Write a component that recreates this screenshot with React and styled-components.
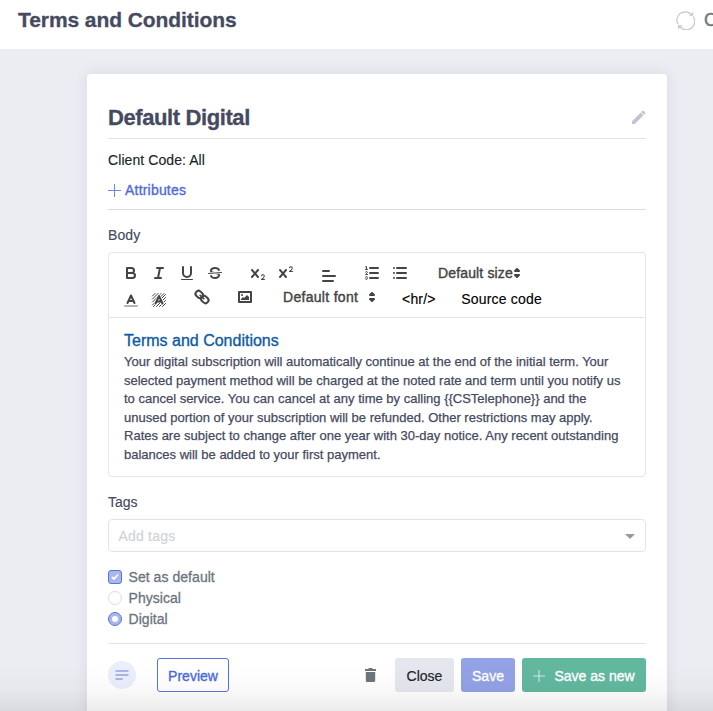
import React from "react";
import styled, { createGlobalStyle, css } from "styled-components";

const Global = createGlobalStyle`
  *, *::before, *::after { box-sizing: border-box; }
  html, body { margin: 0; height: 100%; overflow: hidden; }
  body {
    background: #ecedf3;
    font-family: "Liberation Sans", Arial, sans-serif;
    font-size: 14px;
    color: #464a61;
  }
`;

const Page = styled.div`
  position: relative;
  height: 711px;
  overflow: hidden;
`;

const Header = styled.header`
  display: flex;
  align-items: center;
  height: 49px;
  padding: 0 0 9px 18px;
  background: #fff;
  overflow: hidden;
`;

const PageTitle = styled.h1`
  flex: 1;
  margin: 0;
  font-size: 21px;
  line-height: 24px;
  font-weight: 700;
  letter-spacing: -0.08px;
  white-space: nowrap;
  -webkit-text-stroke: 0.3px;
`;

const HeaderAction = styled.div`
  display: flex;
  align-items: center;
  gap: 9px;
  width: 37px;
  color: #6c757d;
  font-size: 18px;
  white-space: nowrap;
  -webkit-text-stroke: 0.4px;
  svg { flex: none; }
`;

const Card = styled.main`
  width: 580px;
  height: 700px;
  margin: 25px 0 0 87px;
  padding: 28px 21px 0;
  background: #fff;
  border-radius: 4px;
  box-shadow: 0 0 14px rgba(69, 83, 120, 0.13);
`;

const CardHeader = styled.div`
  display: flex;
  align-items: center;
  justify-content: space-between;
  height: 37px;
  padding-bottom: 4px;
  border-bottom: 1px solid #e2e3e8;
`;

const CardTitle = styled.h2`
  margin: 0;
  font-size: 22px;
  line-height: 26px;
  letter-spacing: -0.4px;
  -webkit-text-stroke: 0.3px;
`;

const Pencil = styled.svg`
  margin-bottom: 2px;
`;

const Line = styled.div`
  display: flex;
  align-items: center;
  height: ${(p) => p.$h}px;
  padding-top: ${(p) => p.$pt || 0}px;
  color: ${(p) => p.$color || "#464a61"};
  letter-spacing: ${(p) => p.$ls || 0}px;
  -webkit-text-stroke: ${(p) => p.$stroke || 0.15}px;
`;

const AttributesLink = styled(Line)`
  gap: 4px;
  padding-bottom: 10px;
  border-bottom: 1px solid #dcdde0;
`;

const Editor = styled.section`
  height: 225px;
  border: 1px solid #e4e5ee;
  border-radius: 4px;
`;

const Toolbar = styled.div`
  height: 65px;
  padding: 8px;
  border-bottom: 1px solid #e4e5ee;
`;

const ToolRow = styled.div`
  display: flex;
  gap: 15px;
  height: 24px;
`;

const ToolGroup = styled.div`
  display: flex;
`;

const Tool = styled.button`
  display: flex;
  align-items: flex-start;
  width: 28px;
  height: 24px;
  padding: ${(p) => 3 + (p.$drop || 0)}px 5px 0;
  border: 0;
  background: none;
  color: #444;
  svg { flex: none; overflow: visible; }
`;

const Picker = styled.div`
  display: flex;
  align-items: center;
  justify-content: space-between;
  width: ${(p) => p.$w}px;
  height: 24px;
  padding-left: 9px;
  color: #444;
  letter-spacing: ${(p) => p.$ls}px;
  white-space: nowrap;
  -webkit-text-stroke: 0.4px;
  svg { flex: none; margin-left: -8px; }
`;

const TextTool = styled.button`
  height: 24px;
  margin: 2px 0 0 ${(p) => p.$ml}px;
  padding: 0;
  border: 0;
  background: none;
  color: #000;
  font: 14px "Liberation Sans", Arial, sans-serif;
  letter-spacing: ${(p) => p.$ls || 0}px;
  white-space: nowrap;
  -webkit-text-stroke: 0.15px;
`;

const Content = styled.div`
  padding: 13px 15px 0;
`;

const ContentTitle = styled.div`
  font-size: 16px;
  line-height: 20px;
  margin-bottom: 2px;
  color: #0f5ba3;
  -webkit-text-stroke: 0.35px;
`;

const Copy = styled.div`
  font-size: 13px;
  line-height: 18.6px;
  -webkit-text-stroke: 0.25px;
`;

const CopyLine = styled.div`
  white-space: nowrap;
  letter-spacing: ${(p) => p.$ls || 0}px;
`;

const TagInput = styled.div`
  display: flex;
  align-items: center;
  justify-content: space-between;
  height: 33px;
  padding: 0 10px 0 9.5px;
  border: 1px solid #e3e4ea;
  border-radius: 4px;
  color: #d0d4da;
  letter-spacing: 0.2px;
  -webkit-text-stroke: 0.2px;
`;

const Caret = styled.span`
  margin-top: 1px;
  border: 5px solid transparent;
  border-top-color: #999;
  border-bottom: 0;
`;

const Options = styled.div`
  padding: 14px 0;
`;

const Option = styled.label`
  display: flex;
  align-items: center;
  gap: 6.5px;
  height: 21px;
  color: #6c757d;
  letter-spacing: 0.05px;
  -webkit-text-stroke: 0.3px;
`;

const Mark = styled.span`
  display: grid;
  place-items: center;
  width: 14px;
  height: 14px;
  border: 1px solid #dcdde2;
  border-radius: ${(p) => (p.$square ? 3 : 7)}px;
  ${(p) => p.$on && css`
    border-color: #5875d9;
    background: #aab7ea;
  `}
`;

const Dot = styled.span`
  width: 6px;
  height: 6px;
  border-radius: 50%;
  background: #fff;
`;

const Footer = styled.footer`
  display: flex;
  align-items: center;
  height: 49px;
  padding-top: 14px;
  border-top: 1px solid #e2e3ea;
`;

const RoundButton = styled.button`
  display: grid;
  place-items: center;
  width: 28px;
  height: 28px;
  margin-right: 21px;
  padding: 0;
  border: 0;
  border-radius: 50%;
  background: #ebeefb;
`;

const Actions = styled.div`
  display: flex;
  align-items: center;
  gap: 7px;
  margin-left: auto;
`;

const Trash = styled.svg`
  margin-right: 12px;
`;

const tones = {
  outline: css`border: 1px solid #5573d8; background: #fff; color: #4c6bd6;`,
  muted: css`background: #e4e7ee; color: #212529;`,
  primary: css`background: #93a2e5; color: #fff;`,
  success: css`background: #62b89f; color: #fff;`,
};

const Button = styled.button`
  display: flex;
  align-items: center;
  justify-content: center;
  gap: 9px;
  width: ${(p) => p.$w}px;
  height: 34px;
  padding: 2px 0 0;
  border: 0;
  border-radius: 3px;
  font: 14px "Liberation Sans", Arial, sans-serif;
  letter-spacing: ${(p) => p.$ls || 0}px;
  white-space: nowrap;
  -webkit-text-stroke: ${(p) => p.$stroke || 0.35}px;
  ${(p) => tones[p.$tone]}
`;

const BottomShade = styled.div`
  position: absolute;
  inset: auto 0 0;
  height: 46px;
  background: linear-gradient(transparent, rgba(0, 0, 0, 0.025) 55%, rgba(0, 0, 0, 0.08));
  pointer-events: none;
`;

const Icon = ({ children }) => (
  <svg width="18" height="18" viewBox="0 0 18 18" fill="none" stroke="currentColor" strokeWidth="2" strokeLinecap="round" strokeLinejoin="round">
    {children}
  </svg>
);

const Solid = ({ d }) => <path d={d} fill="currentColor" stroke="none" />;

const CROSS = "M9.65,5.241a1,1,0,0,0-1.409.108L6,7.964,3.759,5.349A1,1,0,0,0,2.192,6.592Q2.215,6.621,2.241,6.649L4.684,9.5,2.241,12.35A1,1,0,0,0,3.71,13.707q.026-.028.049-.057L6,11.036,8.241,13.65a1,1,0,1,0,1.567-1.243Q9.785,12.378,9.759,12.35L7.316,9.5,9.759,6.651A1,1,0,0,0,9.65,5.241Z";
const SMALL_TWO = "M15.5,7H13.861a4.015,4.015,0,0,0,1.914-2.975,1.8,1.8,0,0,0-1.6-1.751A1.922,1.922,0,0,0,12.021,3.7a.5.5,0,1,0,.957.291.917.917,0,0,1,1.053-.725.81.81,0,0,1,.744.762c0,1.077-1.164,1.925-1.934,2.486A1.423,1.423,0,0,0,12,7.5a.5.5,0,0,0,.5.5h3A.5.5,0,0,0,15.5,7Z";

const BoldIcon = () => <Icon><path d="M5 4H9.5a2.5 2.5 0 0 1 0 5H5ZM5 9h5.5a2.5 2.5 0 0 1 0 5H5Z" /></Icon>;
const ItalicIcon = () => <Icon><path d="M7 4h6M5 14h6M8 14 10 4" /></Icon>;
const UnderlineIcon = () => (
  <Icon><path d="M5 3V9a4 4 0 0 0 8 0V3" /><rect x="3" y="15" width="12" height="1" rx=".5" fill="currentColor" stroke="none" /></Icon>
);
const StrikeIcon = () => (
  <Icon>
    <path d="M15.5 8.5 2.5 9.5" strokeWidth="1" />
    <Solid d="M9.007,8C6.542,7.791,6,7.519,6,6.5,6,5.792,7.283,5,9,5c1.571,0,2.765.679,2.969,1.309a1,1,0,0,0,1.9-.617C13.356,4.106,11.354,3,9,3,6.2,3,4,4.538,4,6.5a3.2,3.2,0,0,0,.5,1.843Z" />
    <Solid d="M8.984,10C11.457,10.208,12,10.479,12,11.5c0,.708-1.283,1.5-3,1.5-1.571,0-2.765-.679-2.969-1.309a1,1,0,1,0-1.9.617C4.644,13.894,6.646,15,9,15c2.8,0,5-1.538,5-3.5a3.2,3.2,0,0,0-.5-1.843Z" />
  </Icon>
);
const SubIcon = () => <Icon><Solid d={CROSS} /><g transform="translate(0 8)"><Solid d={SMALL_TWO} /></g></Icon>;
const SuperIcon = () => <Icon><Solid d={CROSS} /><Solid d={SMALL_TWO} /></Icon>;
const AlignIcon = () => <Icon><path d="M3 4h6M3 9h12M3 14h10" /></Icon>;
const OrderedIcon = () => (
  <Icon>
    <path d="M7 4h8M7 9h8M7 14h8" />
    <g strokeWidth="1">
      <path d="M2.500 5.500h2M2.500 2.900 3.500 2.500v3M4.500 10.500h-2c0-.234,1.850-1.076,1.850-2.234A.959.959,0,0,0,2.500,8.156" />
      <path d="M2.500,14.846a.959.959,0,0,0,1.850-.109A.7.7,0,0,0,3.750,14a.688.688,0,0,0,.6-.736.959.959,0,0,0-1.850-.109" />
    </g>
  </Icon>
);
const BulletIcon = () => <Icon><path d="M6 4h9M6 9h9M6 14h9M3 4h0M3 9h0M3 14h0" /></Icon>;
const ColorIcon = () => (
  <Icon><path d="M3 15h12" opacity=".4" /><path d="M5.500 12 9 4.500l3.500 7.500M11.500 10h-5" /></Icon>
);
const BackgroundIcon = () => (
  <Icon>
    <path d="M2.500 5 5 2.500M2.500 8 8 2.500M2.500 11 11 2.500M2.500 14 14 2.500M3.500 15.500 15.500 3.500M6.500 15.500 15.500 6.500M9.500 15.500 15.500 9.500M12.500 15.500 15.500 12.500" strokeWidth="1" />
    <path d="M5.500 12.500 9 5l3.500 7.500" stroke="#fff" strokeWidth="3.200" />
    <path d="M5.500 12.500 9 5l3.500 7.500M11.500 10.500h-5" />
  </Icon>
);
const LinkIcon = () => (
  <Icon>
    <g transform="rotate(42 9 9)" strokeWidth="2">
      <rect x="1.300" y="6" width="7.800" height="6" rx="3" />
      <rect x="8.900" y="6" width="7.800" height="6" rx="3" />
      <path d="M6.500 9h5" strokeWidth="1.600" />
    </g>
  </Icon>
);
const ImageIcon = () => (
  <Icon><rect x="3" y="4" width="12" height="10" /><circle cx="6" cy="7" r="1" fill="currentColor" stroke="none" /><Solid d="M5 12V11L7 9l1 1 3-3 2 2v3Z" /></Icon>
);
const Arrows = () => <Icon><path d="M7 11l2 2 2-2ZM7 7l2-2 2 2Z" fill="currentColor" /></Icon>;

const Plus = ({ size = 13 }) => (
  <svg width={size} height={size} viewBox="0 0 13 13" stroke="currentColor" strokeWidth="1" opacity=".8"><path d="M6.500 0v13M0 6.500h13" /></svg>
);

const body = [
  ["Your digital subscription will automatically continue at the end of the initial term. Your", 0],
  ["selected payment method will be charged at the noted rate and term until you notify us", 0],
  ["to cancel service. You can cancel at any time by calling {{CSTelephone}} and the", 0],
  ["unused portion of your subscription will be refunded. Other restrictions may apply.", 0],
  ["Rates are subject to change after one year with 30-day notice. Any recent outstanding", 0.01],
  ["balances will be added to your first payment.", 0],
];

export default function App() {
  return (
    <Page>
      <Global />
      <Header>
        <PageTitle>Terms and Conditions</PageTitle>
        <HeaderAction>
          <svg width="19" height="19" viewBox="0 0 19 19" fill="none" stroke="#c5c6d3" strokeWidth="1.200">
            <path d="M2.200 13.500A8.200 8.200 0 0 1 15.200 3.600M17 5.500A8.200 8.200 0 0 1 4 15.600" />
            <path d="M12.700 4.800h4.500V1ZM6.500 14.300H2V18.200Z" fill="#c5c6d3" stroke="none" />
          </svg>
          <span>C</span>
        </HeaderAction>
      </Header>
      <Card>
        <CardHeader>
          <CardTitle>Default Digital</CardTitle>
          <Pencil width="15" height="15" viewBox="0 0 15 15" fill="#c3c3d2">
            <path d="M1 11.200 9.700 2.500l2.800 2.800L3.800 14H1ZM10.300 1.900l.8-.8q.9-.8 1.800 0l1 1q.8.900 0 1.800l-.8.8Z" />
          </Pencil>
        </CardHeader>
        <Line $h={42} $color="#212529" $ls={0.08}>Client Code: All</Line>
        <AttributesLink $h={29} $color="#4c6bd6" $stroke={0.35} $ls={0.2}><Plus /> Attributes</AttributesLink>
        <Line $h={42} $pt={8} $ls={0.1}>Body</Line>
        <Editor>
          <Toolbar>
            <ToolRow>
              <ToolGroup>
                <Tool><BoldIcon /></Tool>
                <Tool><ItalicIcon /></Tool>
                <Tool><UnderlineIcon /></Tool>
                <Tool><StrikeIcon /></Tool>
              </ToolGroup>
              <ToolGroup>
                <Tool><SubIcon /></Tool>
                <Tool><SuperIcon /></Tool>
              </ToolGroup>
              <Tool $drop={3}><AlignIcon /></Tool>
              <ToolGroup>
                <Tool><OrderedIcon /></Tool>
                <Tool><BulletIcon /></Tool>
              </ToolGroup>
              <Picker $w={97} $ls={0.15}>Default size<Arrows /></Picker>
            </ToolRow>
            <ToolRow>
              <ToolGroup>
                <Tool $drop={3}><ColorIcon /></Tool>
                <Tool $drop={3}><BackgroundIcon /></Tool>
              </ToolGroup>
              <Tool><LinkIcon /></Tool>
              <Tool><ImageIcon /></Tool>
              <Picker $w={107} $ls={0.3}>Default font<Arrows /></Picker>
              <TextTool $ml={6} $ls={0.2}>&lt;hr/&gt;</TextTool>
              <TextTool $ml={10.5} $ls={0.2}>Source code</TextTool>
            </ToolRow>
          </Toolbar>
          <Content>
            <ContentTitle>Terms and Conditions</ContentTitle>
            <Copy>
              {body.map(([text, ls]) => <CopyLine key={text} $ls={ls}>{text}</CopyLine>)}
            </Copy>
          </Content>
        </Editor>
        <Line $h={42} $pt={8}>Tags</Line>
        <TagInput>Add tags<Caret /></TagInput>
        <Options>
          <Option>
            <Mark $on $square>
              <svg width="8" height="8" viewBox="0 0 8 8" fill="none" stroke="#fff" strokeWidth="1.800"><path d="M1 4l2 2 4-4.500" /></svg>
            </Mark>
            Set as default
          </Option>
          <Option><Mark /> Physical</Option>
          <Option><Mark $on><Dot /></Mark> Digital</Option>
        </Options>
        <Footer>
          <RoundButton>
            <svg width="14" height="10" viewBox="0 0 14 10" stroke="#91a2e6" strokeWidth="1.500" strokeLinecap="round"><path d="M1 1h12M1 5h12M1 9h6" /></svg>
          </RoundButton>
          <Button $tone="outline" $w={72}>Preview</Button>
          <Actions>
            <Trash width="11" height="14" viewBox="0 0 11 14" fill="#6c757d"><path d="M0 1h3L4 0h3l1 1h3v2H0ZM.8 4h9.400v8.500q0 1.500-1.500 1.500H2.300Q.8 14 .8 12.500Z" /></Trash>
            <Button $tone="muted" $w={59} $stroke={0.2}>Close</Button>
            <Button $tone="primary" $w={54}>Save</Button>
            <Button $tone="success" $w={124}><Plus size={12} />Save as new</Button>
          </Actions>
        </Footer>
      </Card>
      <BottomShade />
    </Page>
  );
}
